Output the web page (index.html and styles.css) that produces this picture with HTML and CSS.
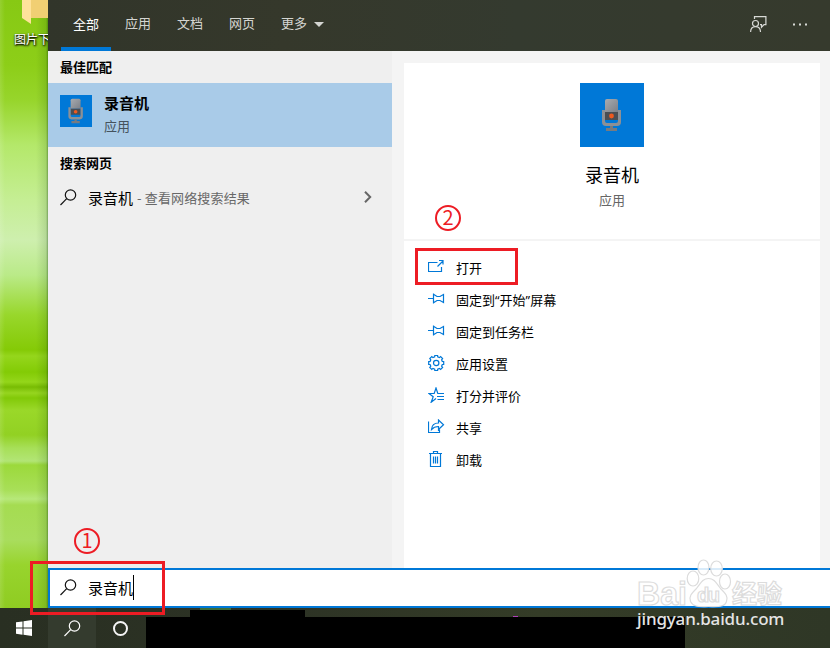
FILE: index.html
```html
<!DOCTYPE html>
<html lang="zh-CN">
<head>
    <meta charset="UTF-8">
    <title>录音机</title>
    <link rel="stylesheet" href="styles.css">
</head>
<body>

<!-- Iconos compartidos -->
<svg class="defs" width="0" height="0">
    <defs>
        <linearGradient id="metal" x1="0" y1="0" x2="1" y2="1">
            <stop offset="0" stop-color="#a7abb0"/>
            <stop offset="1" stop-color="#7c8087"/>
        </linearGradient>
    </defs>
    <symbol id="mic" viewBox="0 0 64 64">
        <path d="M25 18q0-2 2-2h9q2 0 2 2v11H25z" fill="url(#metal)"/>
        <path d="M25 29h13v8H25z" fill="#4b4e53"/>
        <path d="M22 27h3v11q0 2 2 2h9q2 0 2-2V27h3v12q0 4-4 4H26q-4 0-4-4z" fill="#8c9096"/>
        <path d="M30 43h3v2h4v3H26v-3h4z" fill="#777b80"/>
        <circle cx="31.500" cy="33" r="2.400" fill="#f0591e"/>
    </symbol>
    <symbol id="search" viewBox="0 0 17 17">
        <circle cx="10.500" cy="6" r="5.200"/>
        <path d="M6.700 9.700L.5 16"/>
    </symbol>
    <symbol id="pin" viewBox="0 0 17 16">
        <path d="M0 7.500h5.500M5.500 2.500v10M5.500 3.200L9 5.500h3l3.500-2v8L12 9.500H9l-3.500 2.300"/>
    </symbol>
</svg>

<div class="screen">
    <div class="main">
        <div class="desktop">
            <svg class="folder" width="27" height="26" viewBox="0 0 27 26">
                <path d="M8 0h19v18H8z" fill="#f1cf73"/>
                <path d="M0 0h9v24L0 18z" fill="#ffe29a"/>
            </svg>
            <span class="desktop-label">图片下</span>
        </div>

        <div class="panel">
            <div class="tabs">
                <div class="tab active">全部</div>
                <div class="tab">应用</div>
                <div class="tab">文档</div>
                <div class="tab">网页</div>
                <div class="tab">更多<i class="caret"></i></div>
                <div class="tools">
                    <svg width="17" height="17" viewBox="0 0 17 17" fill="none" stroke="#d8d9d6" stroke-width="1.200">
                        <path d="M4.500 3V.6h11.400v8H14l-2.500 2.700V8.600h-1.500"/>
                        <circle cx="5.500" cy="7.500" r="3"/>
                        <path d="M.6 16c0-3.500 2-5.400 4.900-5.400s5 1.900 5 5.400"/>
                    </svg>
                    <svg width="15" height="3" viewBox="0 0 15 3" fill="#d8d9d6">
                        <path d="M0 .5h2v2H0zM6 .5h2v2H6zM12 .5h2v2h-2z"/>
                    </svg>
                </div>
            </div>

            <div class="content">
                <div class="results">
                    <h2>最佳匹配</h2>
                    <div class="best">
                        <svg class="best-icon" viewBox="11 11 42 42"><use href="#mic" width="64" height="64"/></svg>
                        <div>
                            <div class="best-name">录音机</div>
                            <div class="best-type">应用</div>
                        </div>
                    </div>
                    <h2>搜索网页</h2>
                    <div class="web">
                        <svg class="lens"><use href="#search"/></svg>
                        <span class="web-name">录音机</span>
                        <span class="web-hint">- 查看网络搜索结果</span>
                        <svg class="arrow" width="8" height="12" viewBox="0 0 8 12"><path d="M1 .8l5.200 5.200L1 11.200"/></svg>
                    </div>
                </div>

                <div class="preview">
                    <div class="app">
                        <svg class="app-icon" viewBox="0 0 64 64"><use href="#mic"/></svg>
                        <div class="app-name">录音机</div>
                        <div class="app-type">应用</div>
                    </div>
                    <ul class="actions">
                        <li>
                            <svg viewBox="0 0 17 16"><path d="M9.500 3.500h-9v9h13V8M9.500 7.500l5-5M11 1.500h4v4"/></svg>
                            打开
                        </li>
                        <li><svg><use href="#pin"/></svg><span>固定到<q>开始</q>屏幕</span></li>
                        <li><svg><use href="#pin"/></svg>固定到任务栏</li>
                        <li>
                            <svg viewBox="0 0 17 16">
                                <path d="M14.300 6.500l1.400.1v2.800l-1.400.1-.7 1.750 1 1.150-2 2-1.150-1-1.750.7-.1 1.400H6.800l-.1-1.400-1.750-.7-1.150 1-2-2 1-1.150-.7-1.750-1.400-.1V6.600l1.400-.1.700-1.750-1-1.150 2-2 1.150 1 1.750-.7.100-1.400h2.800l.1 1.400 1.750.7 1.150-1 2 2-1 1.150z"/>
                                <circle cx="8.200" cy="8" r="2.700"/>
                            </svg>
                            应用设置
                        </li>
                        <li>
                            <svg viewBox="0 0 17 16"><path d="M16 6.500H9.800L8 1 6.200 6.500H1l4.200 3.300-2 5.400L8 11.500M9 9.500h7M9.500 12.500H16"/></svg>
                            打分并评价
                        </li>
                        <li>
                            <svg viewBox="0 0 17 16"><path d="M.5 2.500v11h11v-3M3.500 10.500c.3-4 2.500-6.500 7-6.500V1l5 4.800-5 4.700v-3c-3.200 0-5.300 1-7 3z"/></svg>
                            共享
                        </li>
                        <li>
                            <svg viewBox="0 0 17 16"><path d="M1 2.500h13M2.500 2.500v13h10v-13M5.500 2.500v-2h4v2M5.500 5.500v7M7.500 5.500v7M9.500 5.500v7"/></svg>
                            卸载
                        </li>
                    </ul>
                </div>
            </div>

            <div class="searchbox">
                <svg class="lens"><use href="#search"/></svg>
                <span>录音机</span><i class="cursor"></i>
            </div>
        </div>
    </div>

    <div class="taskbar">
        <div class="task">
            <svg width="16" height="16" viewBox="0 0 16 16" fill="#fff"><path d="M0 2.300L6.500 1.400v6.100H0zM7.500 1.200L16 0v7.500H7.500zM0 8.500h6.500v6.200L0 13.800zM7.500 8.500H16V16l-8.500-1.200z"/></svg>
        </div>
        <div class="task current"><svg class="lens"><use href="#search"/></svg></div>
        <div class="task"><i class="cortana"></i></div>
        <div class="blackout"></div>
    </div>
</div>

<!-- Marcas sobre la pantalla -->
<div class="blackout-tab"></div>
<div class="app-hint"></div>
<div class="app-dot"></div>
<div class="mark mark-search"></div>
<div class="mark mark-open"></div>
<div class="step step-one">1</div>
<div class="step step-two">2</div>

<div class="watermark">
    <svg width="150" height="52" viewBox="0 0 150 52">
        <g class="wm-logo">
            <text x="0" y="48" font-size="34" textLength="50" lengthAdjust="spacingAndGlyphs">Bai</text>
            <ellipse cx="66.500" cy="10.500" rx="5.500" ry="7.500"/>
            <ellipse cx="79.500" cy="11.500" rx="5.800" ry="7.500"/>
            <ellipse cx="56" cy="21.500" rx="5.800" ry="7.500"/>
            <ellipse cx="88" cy="24.500" rx="5.500" ry="7.500"/>
            <path d="M71.500 21.500c6 0 8 5 12 10 5 5 8 8 6 13-2 6-9 5-18 5s-15 1-18-5c-2-5 1-8 6-13 4-5 6-10 12-10z"/>
            <text x="60" y="44.500" font-size="20" textLength="23">du</text>
            <text class="wm-cn" x="95" y="46" font-size="25" textLength="50">经验</text>
        </g>
    </svg>
    <div class="wm-url">jingyan.baidu.com</div>
</div>

</body>
</html>
```
FILE: styles.css
```css
body {
    margin: 0;
    width: 830px;
    height: 648px;
    position: relative;
    overflow: hidden;
    font-family: "Noto Sans CJK SC", sans-serif;
    font-size: 13px;
    color: #000;
}
svg { display: block; flex: none; }
.defs { position: absolute; }
.screen { display: flex; flex-direction: column; height: 648px; }
.main { display: flex; height: 608px; }

/* escritorio */
.desktop {
    width: 48px;
    box-sizing: border-box;
    overflow: hidden;
    background:
        linear-gradient(90deg, rgba(255,255,255,.12) 0, transparent 5px, transparent 36px, rgba(0,50,0,.12) 46px, rgba(0,50,0,.4) 48px),
        linear-gradient(#87c914 0, #8dce18 65px, #97d52b 100px, #b4e86a 145px, #c5ee94 200px, #ceefae 240px, #baea88 275px, #98d72b 315px, #85ca06 350px, #95d61c 356px, #83cb05 372px, #94d61a 382px, #78bc03 387px, #96d51f 393px, #82c908 398px, #9ad829 410px, #92d123 435px, #a7df58 448px, #b2e575 461px, #9cd93b 465px, #a8df58 490px, #b7e87a 499px, #a5dc51 505px, #a9dd5d 540px, #98d42d 565px, #8fcc22 608px);
}
.folder { margin-left: 22px; }
.desktop-label {
    display: block;
    margin: 3px 0 0 14px;
    white-space: nowrap;
    font-size: 12px;
    line-height: 20px;
    color: #fff;
    text-shadow: 1px 1px 2px #000, 0 1px 2px #000;
}

/* panel de búsqueda */
.panel { width: 782px; display: flex; flex-direction: column; background: #f4f4f4; }
.tabs {
    display: flex;
    height: 51px;
    box-sizing: border-box;
    padding-left: 13px;
    background: linear-gradient(90deg, #31352a, #35382b 30%, #343a2f 60%, #363a2d);
    color: #d4d5d1;
}
.tab {
    width: 52px;
    line-height: 46px;
    text-align: center;
    box-sizing: border-box;
    white-space: nowrap;
}
.tab.active { width: 50px; color: #fff; border-bottom: 4px solid #0078d7; line-height: 48px; }
.tab.active + .tab { margin-left: 1px; }
.tab:nth-child(5) { display: flex; align-items: center; height: 46px; margin-left: 13px; }
.caret { margin: 3px 0 0 7px; border: 5px solid transparent; border-top-color: #d4d5d1; border-bottom: 0; }
.tools { display: flex; align-items: center; gap: 26px; height: 48px; margin-left: auto; padding-right: 22px; }

.content { display: flex; gap: 12px; height: 517px; }
.results { width: 344px; background: #efefef; }
h2 { margin: 0; padding-left: 12px; font-size: 13px; font-weight: 700; line-height: 31px; padding-bottom: 1px; }
.best { display: flex; gap: 12px; height: 64px; box-sizing: border-box; padding: 11px 12px; background: #a9cbe8; }
.best-icon { width: 32px; height: 32px; margin-top: 1px; background: #0078d7; }
.best-name { font-size: 15px; font-weight: 700; line-height: 18px; }
.best-type { margin-top: 3px; line-height: 22px; color: #45525d; }
.web { display: flex; align-items: center; height: 36px; padding: 0 20px 0 12px; }
.lens { width: 17px; height: 17px; fill: none; stroke: #111; stroke-width: 1.2; }
.web-name { margin-left: 11px; font-size: 15px; }
.web-hint { margin-left: 4px; color: #686868; letter-spacing: .15px; }
.arrow { margin-left: auto; fill: none; stroke: #666; stroke-width: 2; }

.preview { width: 416px; box-sizing: border-box; padding-top: 12px; }
.app {
    display: flex;
    flex-direction: column;
    align-items: center;
    height: 176px;
    box-sizing: border-box;
    padding-top: 20px;
    background: #fff;
}
.app-icon { width: 64px; height: 64px; background: #0078d7; }
.app-name { margin-top: 13px; font-size: 18px; line-height: 28px; }
.app-type { margin-top: 1px; line-height: 22px; color: #666; }
.actions {
    height: 327px;
    box-sizing: border-box;
    margin: 2px 0 0;
    padding: 10px 0 0 24px;
    background: #fff;
    list-style: none;
}
.actions li { display: flex; align-items: center; gap: 11px; height: 32px; line-height: 32px; padding-top: 1px; box-sizing: border-box; }
.actions svg { width: 17px; height: 16px; fill: none; stroke: #0078d7; stroke-width: 1.2; margin-top: -1px; }
.actions q { quotes: none; }
.actions q::before, .actions q::after { font-family: "Open Sans", sans-serif; }
.actions q::before { content: "“"; }
.actions q::after { content: "”"; }

.searchbox {
    display: flex;
    align-items: center;
    height: 40px;
    box-sizing: border-box;
    padding-left: 10px;
    padding-bottom: 1px;
    border: 2px solid #0078d7;
    border-right: 0;
    background: #fff;
    font-size: 15px;
}
.searchbox span { margin-left: 11px; padding-bottom: 1px; }
.cursor { width: 1px; height: 25px; background: #000; }

/* barra de tareas */
.taskbar { display: flex; height: 40px; background: linear-gradient(90deg, #292f22, #2d3325 35%, #343c27 65%, #2f3726); }
.task { width: 48px; display: flex; align-items: center; justify-content: center; }
.task.current { background: #343b2e; }
.task .lens { stroke: #fff; }
.cortana { width: 11px; height: 11px; border: 2.5px solid #f5f5f5; border-radius: 50%; }
.blackout { width: 539px; height: 31px; margin: 9px 0 0 2px; background: #000; }
.blackout-tab { position: absolute; left: 190px; top: 610px; width: 115px; height: 10px; background: #000; }
.app-hint { position: absolute; left: 200px; top: 608px; width: 31px; height: 2px; background: #3c6b38; }
.app-dot { position: absolute; left: 513px; top: 616px; width: 5px; height: 1px; background: #b040b8; }

/* marcas rojas */
.mark { position: absolute; box-sizing: border-box; border: 3px solid #ed1c24; }
.mark-search { left: 30px; top: 561px; width: 135px; height: 54px; }
.mark-open { left: 415px; top: 248px; width: 103px; height: 37px; }
.step {
    position: absolute;
    width: 26px;
    height: 26px;
    box-sizing: border-box;
    border: 2px solid #ed1c24;
    border-radius: 50%;
    color: #ed1c24;
    font-size: 20px;
    line-height: 20px;
    text-align: center;
}
.step-one { left: 74px; top: 528px; }
.step-two { left: 435px; top: 205px; }

.watermark { position: absolute; left: 637px; top: 557px; width: 150px; }
.wm-logo {
    fill: rgba(255,255,255,.85);
    stroke: #dcdcdc;
    stroke-width: 1.2;
    font-family: "Liberation Sans", sans-serif;
    font-weight: 700;
}
.wm-cn { font-family: "Noto Sans CJK SC", sans-serif; }
.wm-url {
    margin-top: -3px;
    font-family: "Noto Sans", sans-serif;
    font-size: 17px;
    font-weight: 500;
    line-height: 26px;
    letter-spacing: -.15px;
    color: #e4e4e4;
}
```
